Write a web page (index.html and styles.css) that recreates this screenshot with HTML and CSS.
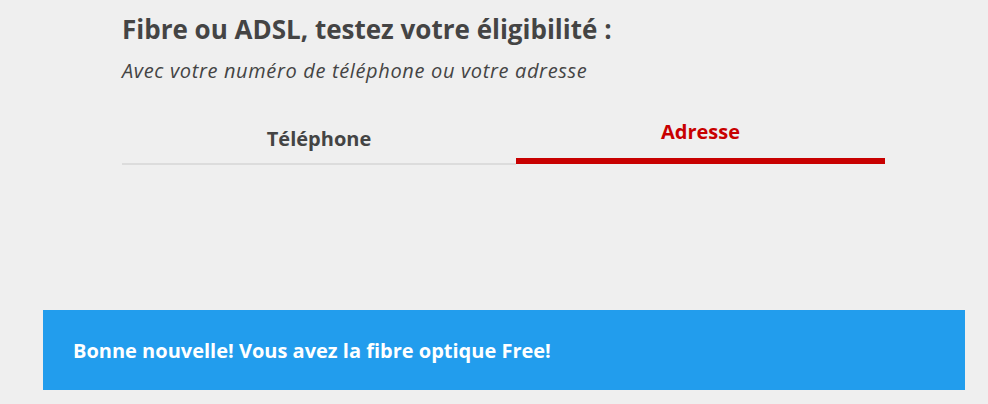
FILE: index.html
```html
<!DOCTYPE html>
<html lang="fr">
<head>
    <meta charset="UTF-8">
    <meta name="viewport" content="width=device-width, initial-scale=1.0">
    <title>Test d'éligibilité</title>
    <link rel="stylesheet" href="styles.css">
</head>
<body>
    <div class="page">
        <div class="eligibility">
            <h1>Fibre ou ADSL, testez votre éligibilité :</h1>
            <p class="subtitle">Avec votre numéro de téléphone ou votre adresse</p>

            <div class="tabs">
                <div class="tab phone">Téléphone</div>
                <div class="tab address active">Adresse</div>
            </div>
        </div>

        <div class="result">
            Bonne nouvelle! Vous avez la fibre optique Free!
        </div>
    </div>
</body>
</html>
```

FILE: styles.css
```css
body {
    margin: 0;
    background: #efefef;
    font-family: "Open Sans", Arial, sans-serif;
    color: #444;
}

.page {
    width: 922px;
    margin-left: 43px;
}

.eligibility {
    width: 763px;
    margin-left: 79px;
    padding-top: 12px;
}

h1 {
    font-size: 26px;
    font-weight: 700;
    line-height: 34px;
    margin: 0;
}

.subtitle {
    font-size: 20px;
    font-style: italic;
    letter-spacing: 0.65px;
    line-height: 26px;
    margin: 12px 0 0;
}

.tabs {
    display: flex;
    align-items: flex-end;
    margin-top: 35px;
}

.tab {
    text-align: center;
    font-size: 20px;
    font-weight: 700;
    line-height: 26px;
    padding-bottom: 11px;
    border-bottom: 2px solid #dcdcdc;
}

.tab.phone {
    width: 394px;
}

.tab.address {
    width: 369px;
}

.tab.active {
    color: #c80000;
    border-bottom: 6px solid #c80000;
    padding-bottom: 13px;
    margin-bottom: 1px;
}

.result {
    margin-top: 145px;
    height: 80px;
    box-sizing: border-box;
    padding: 0 30px;
    display: flex;
    align-items: center;
    background: #229ded;
    color: #fff;
    font-size: 20px;
    font-weight: 700;
}
```
